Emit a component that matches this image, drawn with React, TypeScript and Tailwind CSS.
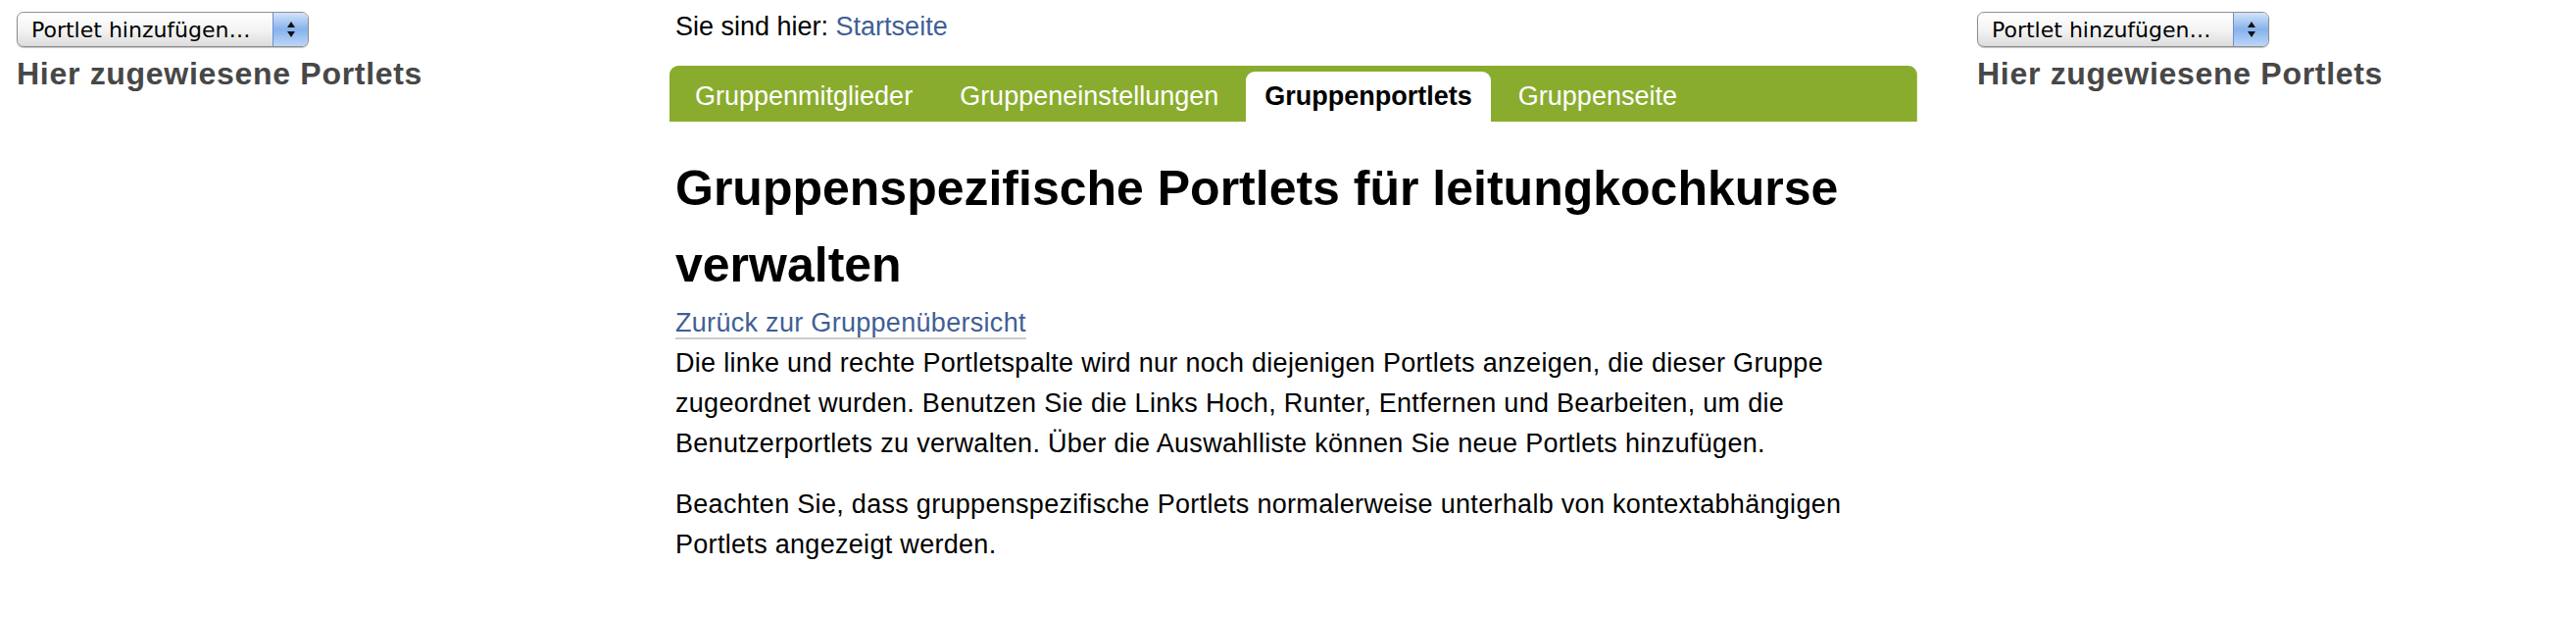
import React from "react";

const tabs = [
  { label: "Gruppenmitglieder", active: false },
  { label: "Gruppeneinstellungen", active: false },
  { label: "Gruppenportlets", active: true },
  { label: "Gruppenseite", active: false },
];

const PortletSelect = () => (
  <div className="flex h-[36px] w-[298px] items-stretch rounded-[7px] border border-[#8e8e8e] bg-gradient-to-b from-white via-[#f4f4f4] to-[#dcdcdc] shadow-[0_1px_1px_rgba(0,0,0,0.25)]">
    <div
      className="flex flex-1 items-center pl-[14px] pt-[2px] text-[22px] leading-none text-black"
      style={{ fontFamily: '"DejaVu Sans", "Liberation Sans", sans-serif' }}
    >
      Portlet hinzufügen…
    </div>
    <div className="flex w-[36px] flex-col items-center justify-center gap-[4px] rounded-r-[6px] border-l border-[#6d8fc9] bg-gradient-to-b from-[#d4e4fa] via-[#86b2ec] to-[#bcd6f7]">
      <svg width="8" height="6" viewBox="0 0 8 6">
        <path d="M4 0 L8 6 L0 6 Z" fill="#111" />
      </svg>
      <svg width="8" height="6" viewBox="0 0 8 6">
        <path d="M0 0 L8 0 L4 6 Z" fill="#111" />
      </svg>
    </div>
  </div>
);

const SideColumn = () => (
  <div className="flex flex-col pt-[12px]">
    <PortletSelect />
    <h2 className="mt-[9px] text-[32px] font-bold leading-[36px] tracking-[0.7px] text-[#474747]">
      Hier zugewiesene Portlets
    </h2>
  </div>
);

export default function App() {
  return (
    <div
      className="flex min-h-[629px] w-full bg-white text-black"
      style={{ fontFamily: '"Liberation Sans", Arial, sans-serif' }}
    >
      <div className="w-[683px] shrink-0 pl-[17px]">
        <SideColumn />
      </div>

      <div className="w-[1273px] shrink-0 pt-[9px]">
        <div className="pl-[6px] text-[27px] leading-[36px]">
          Sie sind hier: <a className="text-[#3f5f95]">Startseite</a>
        </div>

        <div className="mt-[22px] flex h-[57px] items-end gap-[8px] rounded-t-[9px] border-r border-[#a6c25a] bg-[#8aac2e] pl-[6px]">
          {tabs.map((t) => (
            <div
              key={t.label}
              className={
                t.active
                  ? "rounded-t-[9px] bg-white px-[19px] pb-[8px] pt-[7px] text-[27px] font-bold leading-[36px] text-black"
                  : "px-[20px] pb-[8px] pt-[7px] text-[27px] leading-[36px] text-white"
              }
            >
              {t.label}
            </div>
          ))}
        </div>

        <div className="pl-[6px] pr-[40px]">
          <h1 className="mt-[29px] text-[50px] font-bold leading-[78px] text-black">
            Gruppenspezifische Portlets für leitungkochkurse verwalten
          </h1>
          <div className="text-[27px] leading-[41px] tracking-[0.3px]">
            <a className="border-b-2 border-[#cccccc] text-[#3f5f95]">
              Zurück zur Gruppenübersicht
            </a>
          </div>
          <p className="mb-[21px] text-[27px] leading-[41px] tracking-[0.3px]">
            Die linke und rechte Portletspalte wird nur noch diejenigen Portlets anzeigen, die dieser Gruppe
            zugeordnet wurden. Benutzen Sie die Links Hoch, Runter, Entfernen und Bearbeiten, um die
            Benutzerportlets zu verwalten. Über die Auswahlliste können Sie neue Portlets hinzufügen.
          </p>
          <p className="text-[27px] leading-[41px] tracking-[0.3px]">
            Beachten Sie, dass gruppenspezifische Portlets normalerweise unterhalb von kontextabhängigen
            Portlets angezeigt werden.
          </p>
        </div>
      </div>

      <div className="flex-1 pl-[61px]">
        <SideColumn />
      </div>
    </div>
  );
}
